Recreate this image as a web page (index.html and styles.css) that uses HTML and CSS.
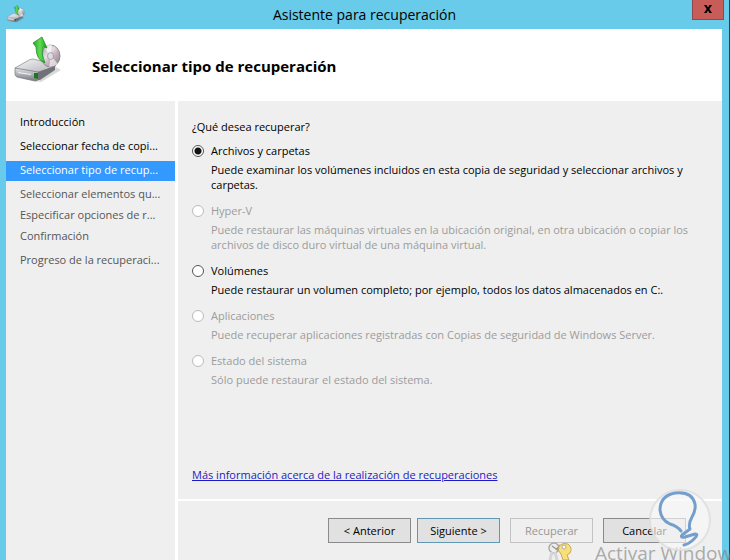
FILE: index.html
```html
<!DOCTYPE html>
<html lang="es">
<head>
    <meta charset="UTF-8">
    <meta name="viewport" content="width=device-width, initial-scale=1.0">
    <title>Asistente para recuperación</title>
    <link rel="stylesheet" href="styles.css">
</head>
<body>
    <!-- Drive, disc and arrow, used in the title bar and in the header -->
    <svg class="symbols" aria-hidden="true">
        <defs>
            <linearGradient id="metal" x1="0" y1="0" x2="1" y2="1">
                <stop offset="0" stop-color="#f6f6f8"/>
                <stop offset="1" stop-color="#b4b4ba"/>
            </linearGradient>
            <linearGradient id="side" x1="0" y1="0" x2="0" y2="1">
                <stop offset="0" stop-color="#e4e4ea"/>
                <stop offset="1" stop-color="#77777f"/>
            </linearGradient>
            <linearGradient id="disc" x1="0" y1="0" x2="1" y2="1">
                <stop offset="0" stop-color="#a39a9f"/>
                <stop offset="0.4" stop-color="#e6dfe3"/>
                <stop offset="0.6" stop-color="#c5afbb"/>
                <stop offset="1" stop-color="#7f7a84"/>
            </linearGradient>
            <linearGradient id="green" x1="0" y1="0" x2="1" y2="0">
                <stop offset="0" stop-color="#25a62b"/>
                <stop offset="0.5" stop-color="#5fdc52"/>
                <stop offset="1" stop-color="#1f9426"/>
            </linearGradient>
            <symbol id="backup" viewBox="0 0 48 48">
                <path d="M3 42L27 46L47 34L42 31L24 44Z" fill="#000" opacity="0.15"/>
                <path d="M1 32L15 24Q17 23 19 23L40 28Q42 29 41 31L24 36L3 33Z" fill="url(#metal)" stroke="#85858c" stroke-width="0.7"/>
                <path d="M1 32L24 36V44Q23 45 21 45L3 41Q1 40 1 38Z" fill="url(#side)" stroke="#77777e" stroke-width="0.7"/>
                <path d="M24 36L41 30V34L26 44L24 44Z" fill="#717179"/>
                <path d="M4 36L17 38V39L4 37Z" fill="#f5f5f8"/>
                <path d="M20 37L24 37V43L20 42Z" fill="#17791b"/>
                <ellipse cx="36.500" cy="20" rx="9.500" ry="11" fill="url(#disc)" stroke="#7d7880" stroke-width="0.8"/>
                <path d="M36 20L30 11Q34 8 38 9Z" fill="#fff" opacity="0.7"/>
                <path d="M37 20L44 28Q40 31 35 31Z" fill="#fff" opacity="0.6"/>
                <ellipse cx="36.500" cy="20" rx="3" ry="3.500" fill="#dcdce2" stroke="#8f8b96" stroke-width="0.7"/>
                <path d="M19 7L28 1L33 12L29 11Q27 19 31 27Q22 24 22 11Z" fill="url(#green)" stroke="#16851d" stroke-width="0.7"/>
            </symbol>
        </defs>
    </svg>

    <div class="window">
        <header class="title-bar">
            <svg class="app-icon" aria-hidden="true"><use href="#backup"/></svg>
            <h1>Asistente para recuperación</h1>
            <button type="button" class="close-button" aria-label="Cerrar">
                <svg viewBox="0 0 10 10" aria-hidden="true"><path d="M1 1H3.500L5 3.500L6.500 1H9L6.300 5L9 9H6.500L5 6.500L3.500 9H1L3.700 5Z"/></svg>
            </button>
        </header>

        <div class="page-header">
            <svg class="page-icon" aria-hidden="true"><use href="#backup"/></svg>
            <h2>Seleccionar tipo de recuperación</h2>
        </div>

        <div class="content">
            <nav class="steps">
                <ul>
                    <li class="done">Introducción</li>
                    <li class="done">Seleccionar fecha de copi...</li>
                    <li class="current">Seleccionar tipo de recup...</li>
                    <li>Seleccionar elementos qu...</li>
                    <li class="tight">Especificar opciones de r...</li>
                    <li class="tight">Confirmación</li>
                    <li>Progreso de la recuperaci...</li>
                </ul>
            </nav>

            <div class="panel">
                <main>
                    <form id="recoveryForm">
                        <fieldset>
                            <legend>¿Qué desea recuperar?</legend>

                            <div class="option">
                                <input type="radio" name="type" id="files" checked>
                                <label for="files">Archivos y carpetas</label>
                                <p>Puede examinar los volúmenes incluidos en esta copia de seguridad y seleccionar archivos y carpetas.</p>
                            </div>
                            <div class="option disabled">
                                <input type="radio" name="type" id="hyperv" disabled>
                                <label for="hyperv">Hyper-V</label>
                                <p>Puede restaurar las máquinas virtuales en la ubicación original, en otra ubicación o copiar los archivos de disco duro virtual de una máquina virtual.</p>
                            </div>
                            <div class="option">
                                <input type="radio" name="type" id="volumes">
                                <label for="volumes">Volúmenes</label>
                                <p>Puede restaurar un volumen completo; por ejemplo, todos los datos almacenados en C:.</p>
                            </div>
                            <div class="option disabled">
                                <input type="radio" name="type" id="apps" disabled>
                                <label for="apps">Aplicaciones</label>
                                <p>Puede recuperar aplicaciones registradas con Copias de seguridad de Windows Server.</p>
                            </div>
                            <div class="option disabled">
                                <input type="radio" name="type" id="system" disabled>
                                <label for="system">Estado del sistema</label>
                                <p>Sólo puede restaurar el estado del sistema.</p>
                            </div>
                        </fieldset>
                    </form>
                    <a href="#" class="more-link">Más información acerca de la realización de recuperaciones</a>
                </main>

                <footer>
                    <div class="pager">
                        <button type="button">&lt; Anterior</button>
                        <button type="submit" form="recoveryForm" class="default">Siguiente &gt;</button>
                    </div>
                    <button type="button" disabled>Recuperar</button>
                    <button type="button">Cancelar</button>
                </footer>
            </div>
        </div>
    </div>

    <!-- Activation notice and logo that lie over the window -->
    <div class="watermark">
        <svg class="keys" viewBox="0 0 26 18" aria-hidden="true">
            <circle cx="7" cy="6" r="5" fill="#eee" stroke="#aaa" stroke-width="1.500"/>
            <path d="M5 10L3 18M8 10L10 18" stroke="#d5d5d5" stroke-width="3"/>
            <path d="M5 4L12 9M13 3L9 8" stroke="#999" stroke-width="1.500"/>
            <path d="M12 4Q16 0 21 2Q26 6 23 11L20 13L22 18H16L14 12Q10 9 12 4Z" fill="#f8df78" stroke="#c9a75f"/>
            <circle cx="17" cy="5" r="2" fill="#fff" stroke="#aaa"/>
        </svg>
        <span>Activar Windows</span>
    </div>
    <svg class="logo" viewBox="0 0 64 64" aria-hidden="true">
        <circle cx="32" cy="32" r="30" fill="#f7f7f7" fill-opacity="0.65" stroke="#ddd" stroke-opacity="0.8" stroke-width="2"/>
        <path d="M33 43Q29 38 22 36Q13 32 12 22Q12 8 27 5Q44 3 47 16Q48 22 44 29Q40 36 42 41L34 47Q32 50 37 49L47 46Q51 46 46 51Q41 56 36 57" fill="none" stroke="#749fcd" stroke-width="3" stroke-linecap="round" stroke-linejoin="round"/>
    </svg>
</body>
</html>
```
FILE: styles.css
```css
* {
    margin: 0;
    padding: 0;
    box-sizing: border-box;
}

body {
    position: relative;
    min-height: 100vh;
    padding-right: 1px;
    display: flex;
    overflow: hidden;
    background-color: #0b4a77;
    color: #000;
    font-family: "Open Sans", "Noto Sans", sans-serif;
    font-size: 11px;
    line-height: 15px;
}

.symbols {
    position: absolute;
    width: 0;
    height: 0;
}

.window {
    flex: 1;
    display: flex;
    flex-direction: column;
    padding: 0 7px 0 6px;
    background-color: #67cbe9;
}

/* Title bar */
.title-bar {
    height: 29px;
    display: flex;
    align-items: center;
    justify-content: space-between;
    margin-right: -2px;
}

.title-bar h1 {
    font-size: 14px;
    font-weight: normal;
}

.app-icon {
    width: 18px;
    height: 18px;
    margin: 0 12px 2px 1px;
}

.close-button {
    align-self: flex-start;
    width: 32px;
    height: 20px;
    border: 1px solid #8f4a50;
    border-top: none;
    background-color: #c75c58;
}

.close-button svg {
    width: 10px;
    height: 10px;
}

/* Page heading */
.page-header {
    height: 72px;
    display: flex;
    align-items: center;
    gap: 30px;
    padding: 2px 8px 0;
    background-color: #fff;
}

.page-header h2 {
    font-size: 15px;
    font-weight: bold;
}

.page-icon {
    width: 48px;
    height: 48px;
    margin-bottom: 12px;
}

.content {
    flex: 1;
    display: flex;
    background-color: #efefef;
}

/* List of steps */
.steps {
    width: 172px;
    padding-top: 12px;
    border-right: 3px solid #fff;
}

.steps ul {
    list-style-type: none;
}

.steps li {
    height: 20px;
    margin-bottom: 4px;
    padding-left: 14px;
    line-height: 17px;
    white-space: nowrap;
    color: #555;
}

.steps li.done {
    color: #000;
}

.steps li.current {
    background-color: #3399ff;
    color: #fff;
}

.steps li.tight {
    margin-top: -3px;
}

/* Options */
.panel {
    flex: 1;
    display: flex;
    flex-direction: column;
}

main {
    flex: 1;
    display: flex;
    flex-direction: column;
    align-items: flex-start;
    justify-content: space-between;
    padding: 16px 28px 16px 14px;
    border-bottom: 2px solid #fff;
}

fieldset {
    border: none;
}

legend {
    margin-bottom: 3px;
    line-height: 20px;
}

.option {
    display: grid;
    grid-template-columns: 12px 1fr;
    column-gap: 7px;
    align-items: center;
    margin-bottom: 8px;
}

.option label {
    line-height: 22px;
}

.option p {
    grid-column: 2;
}

.option input {
    appearance: none;
    width: 12px;
    height: 12px;
    border: 1px solid #555;
    border-radius: 50%;
    background-color: #fff;
}

.option input:checked {
    background-image: radial-gradient(circle, #111 3px, transparent 4px);
}

.option.disabled {
    color: #9c9c9c;
}

.option.disabled input {
    border-color: #bbb;
}

.more-link {
    color: #1c1cc4;
    line-height: 16px;
}

/* Buttons */
footer {
    display: flex;
    justify-content: flex-end;
    gap: 10px;
    padding: 17px 36px 17px 0;
}

.pager {
    display: flex;
    gap: 6px;
}

footer button {
    width: 83px;
    height: 25px;
    border: 1px solid #8a8a8a;
    background-color: #e1e1e1;
    color: #000;
    font-family: inherit;
    font-size: 11px;
}

footer button.default {
    border-color: #5f97b5;
}

footer button:disabled {
    border-color: #c3c3c3;
    background-color: #efefef;
    color: #969696;
}

/* Overlays */
.watermark {
    position: absolute;
    right: 0;
    bottom: 0;
    width: 183px;
    height: 18px;
    display: flex;
    gap: 22px;
    overflow: hidden;
    font-size: 19px;
    line-height: 22px;
    white-space: nowrap;
    color: rgba(130, 130, 130, 0.65);
}

.keys {
    flex: none;
    width: 26px;
    height: 18px;
}

.logo {
    position: absolute;
    right: 18px;
    bottom: 8px;
    width: 64px;
    height: 64px;
}
```
